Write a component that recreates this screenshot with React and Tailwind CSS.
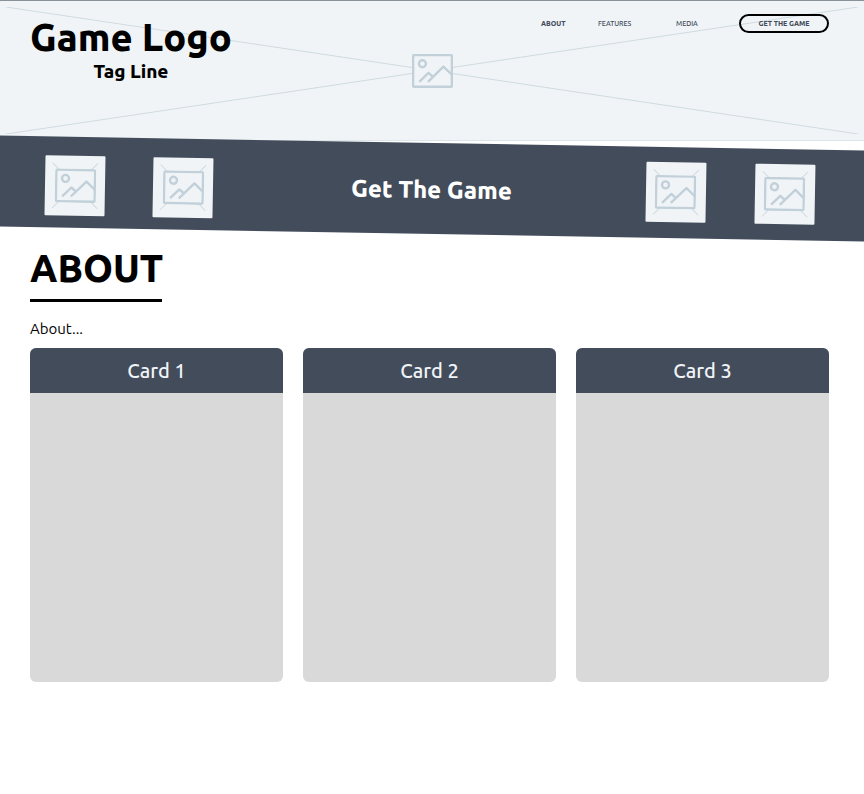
const cards = ["Card 1", "Card 2", "Card 3"];

function PictureIcon() {
  return (
    <svg className="h-[34px] w-[41px]" viewBox="0 0 41 34" fill="none" stroke="#c1d0d9" strokeWidth="2.4" aria-hidden="true">
      <rect x="1.1" y="1.1" width="38.8" height="31.6" rx="1.2" fill="#f0f4f7" />
      <circle cx="10.4" cy="9.8" r="3.5" />
      <path d="M7.3 27.8L16.4 18.8L20.8 22.6M16 27.8L31.4 12.6L39.6 20.4" strokeLinejoin="round" />
    </svg>
  );
}

function Cross() {
  return (
    <svg className="h-full w-full" viewBox="0 0 100 100" preserveAspectRatio="none" stroke="#d0dbe0" aria-hidden="true">
      <path d="M0 0L100 100M0 100L100 0" vectorEffect="non-scaling-stroke" />
    </svg>
  );
}

function Thumb() {
  return (
    <div className="relative flex size-[60px] items-center justify-center rounded-[1px] bg-[#f0f4f7]">
      <div className="absolute inset-[7px]">
        <Cross />
      </div>
      <div className="relative">
        <PictureIcon />
      </div>
    </div>
  );
}

export default function App() {
  return (
    <div className="min-h-screen overflow-x-hidden bg-white font-['Ubuntu','Noto_Sans',sans-serif] text-black">
      <header className="relative border-t border-b border-t-[#8a9299] border-b-[#dbe5ea] bg-[#f0f4f7] pr-[35px] pl-[30px]">
        <div className="absolute inset-x-[6px] top-[6px] bottom-[6px]">
          <Cross />
        </div>
        <div className="absolute inset-0 flex items-center justify-center">
          <PictureIcon />
        </div>
        <div className="relative flex h-[139px] items-start justify-between pt-[13px]">
          <div className="text-center font-extrabold">
            <h1 className="text-[38px] leading-[46px]">Game Logo</h1>
            <p className="text-[19px] leading-[22px]">Tag Line</p>
          </div>
          <nav className="flex h-[19px] items-center text-[7px] text-[#434c5b]">
            <a href="#about" className="w-[57px] font-extrabold">ABOUT</a>
            <a href="#features" className="w-[78px] font-medium">FEATURES</a>
            <a href="#media" className="w-[63px] font-medium">MEDIA</a>
            <button type="button" className="h-[19px] w-[90px] rounded-full border-2 border-black text-center font-extrabold text-[#434c5b]">
              GET THE GAME
            </button>
          </nav>
        </div>
      </header>

      <section className="relative -mx-4 mt-0.5 flex h-[91px] rotate-1 items-center justify-between bg-[#434c5b] pr-[65px] pl-[61px]">
        <div className="flex gap-12 pt-1.5">
          <Thumb />
          <Thumb />
        </div>
        <h2 className="pt-0.5 pl-1 text-[24px] font-extrabold text-white">Get The Game</h2>
        <div className="flex gap-[49px] pb-0.5">
          <Thumb />
          <Thumb />
        </div>
      </section>

      <main id="about" className="pt-[11px] pr-[35px] pl-[30px]">
        <h2 className="text-[38px] leading-[46px] font-extrabold">ABOUT</h2>
        <hr className="mt-2 w-[132px] border-t-[3px] border-black" />
        <p className="mt-4 text-[15px] leading-[22px]">About...</p>
        <div className="mt-2 grid grid-cols-3 gap-5">
          {cards.map((title) => (
            <article key={title} className="overflow-hidden rounded-md bg-[#d9d9d9]">
              <h3 className="bg-[#434c5b] text-center text-[20px] leading-[45px] font-medium text-[#f0f4f7]">{title}</h3>
              <div className="h-[289px]" />
            </article>
          ))}
        </div>
      </main>
    </div>
  );
}
